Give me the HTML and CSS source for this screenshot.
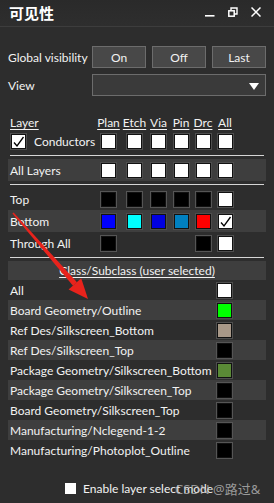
FILE: index.html
```html
<!DOCTYPE html>
<html lang="zh">
<head>
    <meta charset="UTF-8">
    <meta name="viewport" content="width=device-width, initial-scale=1.0">
    <title>可见性</title>
    <link rel="stylesheet" href="styles.css">
</head>
<body>
    <div class="titlebar">
        <span class="title">可见性</span>
        <div class="win-icons">
            <svg class="ico-min" width="10" height="10" viewBox="0 0 10 10"><rect x="0" y="8" width="9.5" height="1.6" fill="#fff"/></svg>
            <svg class="ico-restore" width="10" height="10" viewBox="0 0 10 10">
                <path d="M3 3V1h6v6H6" fill="none" stroke="#fff" stroke-width="1.4"/>
                <rect x="0.8" y="3.8" width="5.4" height="5.4" fill="none" stroke="#fff" stroke-width="1.5"/>
            </svg>
            <svg class="ico-close" width="10" height="10" viewBox="0 0 10 10"><path d="M0.5 0.5L9.5 9.5M9.5 0.5L0.5 9.5" stroke="#fff" stroke-width="1.5"/></svg>
        </div>
    </div>

    <div class="panel">
        <div class="global-row">
            <span class="lbl">Global visibility</span>
            <button class="btn">On</button>
            <button class="btn">Off</button>
            <button class="btn">Last</button>
        </div>
        <div class="view-row">
            <span class="lbl">View</span>
            <div class="dropdown"><span class="caret"></span></div>
        </div>

        <div class="grid head">
            <span class="u">Layer</span>
            <span class="u">Plan</span>
            <span class="u">Etch</span>
            <span class="u">Via</span>
            <span class="u">Pin</span>
            <span class="u">Drc</span>
            <span class="u">All</span>
        </div>
        <div class="grid cond">
            <span class="cond-label"><span class="box white check-box"><svg width="13" height="13" viewBox="0 0 13 13"><path d="M2 7.5L5 11L11.5 2" fill="none" stroke="#000" stroke-width="1.3"/></svg></span>Conductors</span>
            <span class="box white"></span>
            <span class="box white"></span>
            <span class="box white"></span>
            <span class="box white"></span>
            <span class="box white"></span>
            <span class="box white"></span>
        </div>
        <div class="sep first"></div>
        <div class="grid layer-row hl all-layers">
            <span>All Layers</span>
            <span class="box white"></span>
            <span class="box white"></span>
            <span class="box white"></span>
            <span class="box white"></span>
            <span class="box white"></span>
            <span class="box white"></span>
        </div>
        <div class="sep"></div>
        <div class="layers">
            <div class="grid layer-row">
                <span>Top</span>
                <span class="box black"></span>
                <span class="box black"></span>
                <span class="box black"></span>
                <span class="box black"></span>
                <span class="box black"></span>
                <span class="box white"></span>
            </div>
            <div class="grid layer-row hl">
                <span>Bottom</span>
                <span class="box" style="background:#0000ff"></span>
                <span class="box" style="background:#00ffff"></span>
                <span class="box" style="background:#0000e0"></span>
                <span class="box" style="background:#0080c0"></span>
                <span class="box" style="background:#ff0000"></span>
                <span class="box white"><svg width="13" height="13" viewBox="0 0 13 13"><path d="M2 7.5L5 11L11.5 2" fill="none" stroke="#000" stroke-width="1.3"/></svg></span>
            </div>
            <div class="grid layer-row">
                <span>Through All</span>
                <span class="box black"></span>
                <span></span>
                <span></span>
                <span></span>
                <span class="box black"></span>
                <span class="box white"></span>
            </div>
        </div>
        <div class="sep"></div>

        <div class="class-head hl"><span class="u">Class/Subclass (user selected)</span></div>
        <div class="class-list">
            <div class="class-row"><span>All</span><span class="box white"></span></div>
            <div class="class-row hl"><span>Board Geometry/Outline</span><span class="box" style="background:#00ff00"></span></div>
            <div class="class-row"><span>Ref Des/Silkscreen_Bottom</span><span class="box" style="background:#a89888"></span></div>
            <div class="class-row hl"><span>Ref Des/Silkscreen_Top</span><span class="box black"></span></div>
            <div class="class-row"><span>Package Geometry/Silkscreen_Bottom</span><span class="box" style="background:#5a8a36"></span></div>
            <div class="class-row hl"><span>Package Geometry/Silkscreen_Top</span><span class="box black"></span></div>
            <div class="class-row"><span>Board Geometry/Silkscreen_Top</span><span class="box black"></span></div>
            <div class="class-row hl"><span>Manufacturing/Nclegend-1-2</span><span class="box black"></span></div>
            <div class="class-row"><span>Manufacturing/Photoplot_Outline</span><span class="box black"></span></div>
        </div>

        <div class="enable-row">
            <span class="small-check"></span>
            <span>Enable layer select mode</span>
        </div>
    </div>

    <!-- red annotation arrow -->
    <svg class="arrow" width="274" height="503" viewBox="0 0 274 503">
        <polygon points="12.4,213.5 13.6,212.5 77.0,282.3 73.0,285.7" fill="#e8231c"/>
        <polygon points="88,299 68.6,289.5 81.2,278.3" fill="#e8231c"/>
    </svg>
    <div class="watermark">CSDN @路过&amp;</div>
</body>
</html>
```

FILE: styles.css
```css
body {
    margin: 0;
    width: 274px;
    height: 503px;
    background: #2d2d2d;
    color: #f2f2f2;
    font-family: Lato, "Open Sans", "Noto Sans CJK SC", sans-serif;
    font-size: 12px;
    position: relative;
    overflow: hidden;
    white-space: nowrap;
}
.titlebar {
    height: 26px;
    background: linear-gradient(#2a2a2a, #2e2e2e);
    border-bottom: 1px solid #3d3d3d;
    display: flex;
    align-items: center;
    justify-content: space-between;
    padding: 0 13px 0 9px;
}
.title {
    font-family: "Noto Sans CJK SC", sans-serif;
    font-weight: bold;
    font-size: 15px;
    color: #fff;
    margin-top: -2px;
}
.win-icons {
    display: flex;
    gap: 13px;
    align-items: center;
    margin-top: -3px;
}
.panel {
    padding: 0 8px;
}
.lbl {
    width: 84px;
    flex-shrink: 0;
    display: inline-block;
}
.global-row {
    margin-top: 19px;
    display: flex;
    align-items: center;
    gap: 6px;
}
.global-row .lbl {
    width: 78px;
}
.btn {
    width: 54px;
    height: 22px;
    flex-shrink: 0;
    background: #484848;
    border: 1px solid #6c6c6c;
    color: #f2f2f2;
    font-family: inherit;
    font-size: 12px;
    padding: 0;
}
.view-row {
    margin-top: 6px;
    display: flex;
    align-items: center;
}
.dropdown {
    width: 172px;
    height: 20px;
    background: #3a3a3a;
    border: 1px solid #6c6c6c;
    position: relative;
}
.caret {
    position: absolute;
    right: 6px;
    top: 8px;
    border-left: 5px solid transparent;
    border-right: 5px solid transparent;
    border-top: 7px solid #fff;
}
.u {
    text-decoration: underline;
    text-underline-offset: 2px;
}
.grid {
    display: grid;
    grid-template-columns: 85px 27px 25px 23px 22px 22px 22px;
    align-items: center;
    justify-items: center;
    padding-left: 2px;
}
.grid > span:first-child {
    justify-self: start;
}
.head {
    margin-top: 18px;
    height: 17px;
}
.cond {
    height: 20px;
}
.cond-label {
    display: flex;
    align-items: center;
    gap: 8px;
    margin-left: 1px;
}
.box {
    width: 13px;
    height: 13px;
    border: 1px solid #111;
    box-shadow: 0 0 0 1px #4e4e4e;
    display: block;
}
.box svg {
    display: block;
}
.white {
    background: #fff;
}
.black {
    background: #000;
    box-shadow: inset 0 0 0 1px #000, 0 0 0 1px #555;
}
.sep {
    height: 1px;
    background: #d6d6d6;
    margin: 3px 2px;
}
.sep.first {
    margin-top: 4px;
}
.layer-row {
    height: 22px;
}
.hl {
    background: #3e3e3e;
}
.class-head {
    height: 19px;
    display: flex;
    align-items: center;
    justify-content: center;
}
.class-row {
    height: 20px;
    display: flex;
    align-items: center;
    justify-content: space-between;
    padding: 0 34px 0 2px;
}
.enable-row {
    margin-top: 18px;
    height: 20px;
    display: flex;
    align-items: center;
    gap: 7px;
    padding-left: 57px;
}
.small-check {
    width: 11px;
    height: 11px;
    background: #fff;
}
.arrow {
    position: absolute;
    left: 0;
    top: 0;
    pointer-events: none;
}
.watermark {
    position: absolute;
    left: 175px;
    top: 479px;
    font-size: 13px;
    color: rgba(190, 190, 190, 0.75);
    font-family: "Noto Sans", "Noto Sans CJK SC", sans-serif;
}
```
